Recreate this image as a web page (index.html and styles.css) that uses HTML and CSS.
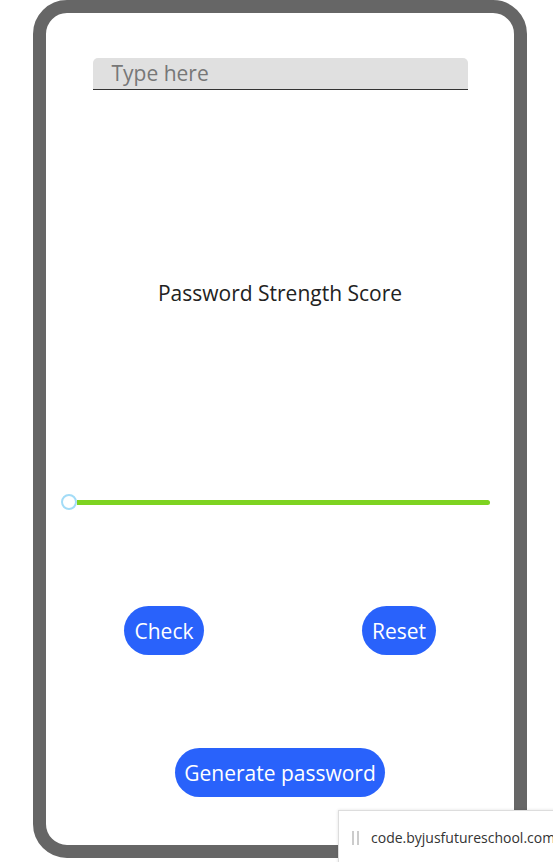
FILE: index.html
```html
<!DOCTYPE html>
<html>
<head>
<meta charset="utf-8">
<link rel="stylesheet" href="styles.css">
</head>
<body>
<div class="frame">
  <div class="field"><span class="placeholder">Type here</span></div>
  <div class="title">Password Strength Score</div>
  <div class="slider"><span class="thumb"></span><span class="track"></span></div>
  <div class="actions">
    <button class="btn btn-check">Check</button>
    <button class="btn btn-reset">Reset</button>
  </div>
  <button class="btn btn-generate">Generate password</button>
</div>
<div class="badge"><span class="badge-icon"></span><span class="badge-text">code.byjusfutureschool.com</span></div>
</body>
</html>
```
FILE: styles.css
```css
html, body { margin: 0; padding: 0; background: #fff; }
body {
  width: 553px; height: 862px; overflow: hidden; position: relative;
  font-family: "Open Sans", "Noto Sans", sans-serif;
}
.frame {
  margin-left: 33px;
  width: 494px; height: 858px;
  box-sizing: border-box;
  border: 13px solid #666;
  border-radius: 34px;
  display: flex; flex-direction: column; align-items: center;
}
.field {
  margin-top: 45px;
  width: 375px; height: 32px; box-sizing: border-box;
  background: #e0e0e0;
  border-bottom: 1px solid #333;
  border-radius: 5px 5px 0 0;
  display: flex; align-items: center;
  padding-left: 19px;
}
.placeholder { color: #777; font-size: 21px; line-height: 1; }
.title {
  margin-top: 189px;
  font-size: 21px; line-height: 28px; color: #222;
}
.slider {
  margin-top: 187px;
  align-self: flex-start; margin-left: 15px;
  width: 429px; height: 16px;
  display: flex; align-items: center;
}
.thumb {
  width: 16px; height: 16px; box-sizing: border-box;
  border: 2px solid #a3dcf7; border-radius: 50%; background: #fff;
}
.track {
  flex: 1; height: 5px; background: #7ed321; border-radius: 0 3px 3px 0;
}
.actions {
  margin-top: 96px;
  align-self: stretch;
  display: flex; justify-content: space-between;
  padding: 0 78px 0 78px;
}
.btn {
  border: none; background: #2962fb; color: #fff;
  font-family: "Open Sans", "Noto Sans", sans-serif;
  font-size: 21px; height: 49px; border-radius: 25px;
  padding: 0; cursor: pointer;
}
.btn-check { width: 80px; }
.btn-reset { width: 74px; }
.btn-generate { margin-top: 93px; width: 210px; }
.badge {
  position: absolute; left: 338px; top: 810px;
  width: 240px; height: 60px;
  background: #fff;
  border: 1px solid #ddd;
  box-shadow: 0 0 3px rgba(0,0,0,0.12);
  display: flex; align-items: flex-start;
  padding-top: 18px; box-sizing: border-box; padding-left: 13px;
}
.badge-icon {
  width: 7px; height: 14px; margin-top: 2px;
  border-left: 2px solid #ccc; border-right: 2px solid #ccc; box-sizing: border-box;
}
.badge-text { margin-left: 12px; font-size: 14px; color: #333; line-height: 18px; white-space: nowrap; }
```
